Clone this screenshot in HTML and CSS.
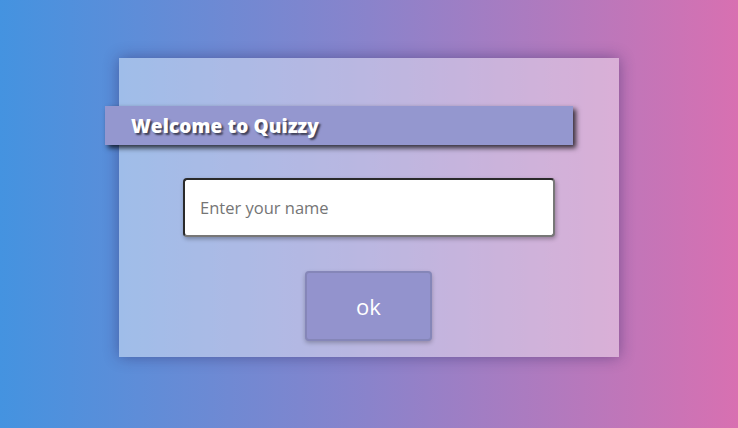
FILE: index.html
```html
<!DOCTYPE html>
<html>
<head>
<meta charset="utf-8">
<link rel="stylesheet" href="styles.css">
</head>
<body>
<div class="stage">
  <div class="card">
    <div class="banner"><span class="title">Welcome to Quizzy</span></div>
    <div class="field"><span class="placeholder">Enter your name</span></div>
    <div class="btn">ok</div>
  </div>
</div>
</body>
</html>
```
FILE: styles.css
```css
html, body {
  margin: 0;
  height: 100%;
}
body {
  background: linear-gradient(to right, #4493e0 0%, #8a83cb 50%, #d870b1 100%);
  font-family: "Open Sans", "Noto Sans", sans-serif;
}
.stage {
  display: flex;
  justify-content: center;
  padding-top: 58px;
}
.card {
  width: 500px;
  height: 299px;
  box-sizing: border-box;
  background: rgba(255, 255, 255, 0.42);
  box-shadow: 0 0 14px rgba(40, 30, 90, 0.45);
  display: flex;
  flex-direction: column;
  padding-top: 48px;
}
.banner {
  margin-left: -14px;
  width: 468px;
  height: 39px;
  background: #9497cf;
  box-shadow: 3px 3px 5px rgba(0, 0, 0, 0.75);
  display: flex;
  align-items: center;
  padding-left: 26px;
  box-sizing: border-box;
}
.title {
  color: #fff;
  font-weight: 800;
  font-size: 19px;
  letter-spacing: 0.1px;
  text-shadow: 2px 2px 2px rgba(0, 0, 0, 0.6);
}
.field {
  margin: 33px 0 0 64px;
  width: 372px;
  height: 59px;
  box-sizing: border-box;
  background: #fff;
  border: 2px solid #2a2a2a;
  border-right-color: #777;
  border-bottom-color: #777;
  border-radius: 4px;
  box-shadow: 1px 2px 4px rgba(0, 0, 0, 0.3);
  display: flex;
  align-items: center;
  padding-left: 15px;
}
.placeholder {
  color: #757575;
  font-size: 16.5px;
}
.btn {
  margin: 34px 0 0 186px;
  width: 127px;
  height: 70px;
  box-sizing: border-box;
  background: #9393cd;
  border: 2px solid #8586b8;
  border-radius: 4px;
  box-shadow: 0 2px 4px rgba(0, 0, 0, 0.25);
  display: flex;
  align-items: center;
  justify-content: center;
  color: #fff;
  font-size: 22px;
}
```
